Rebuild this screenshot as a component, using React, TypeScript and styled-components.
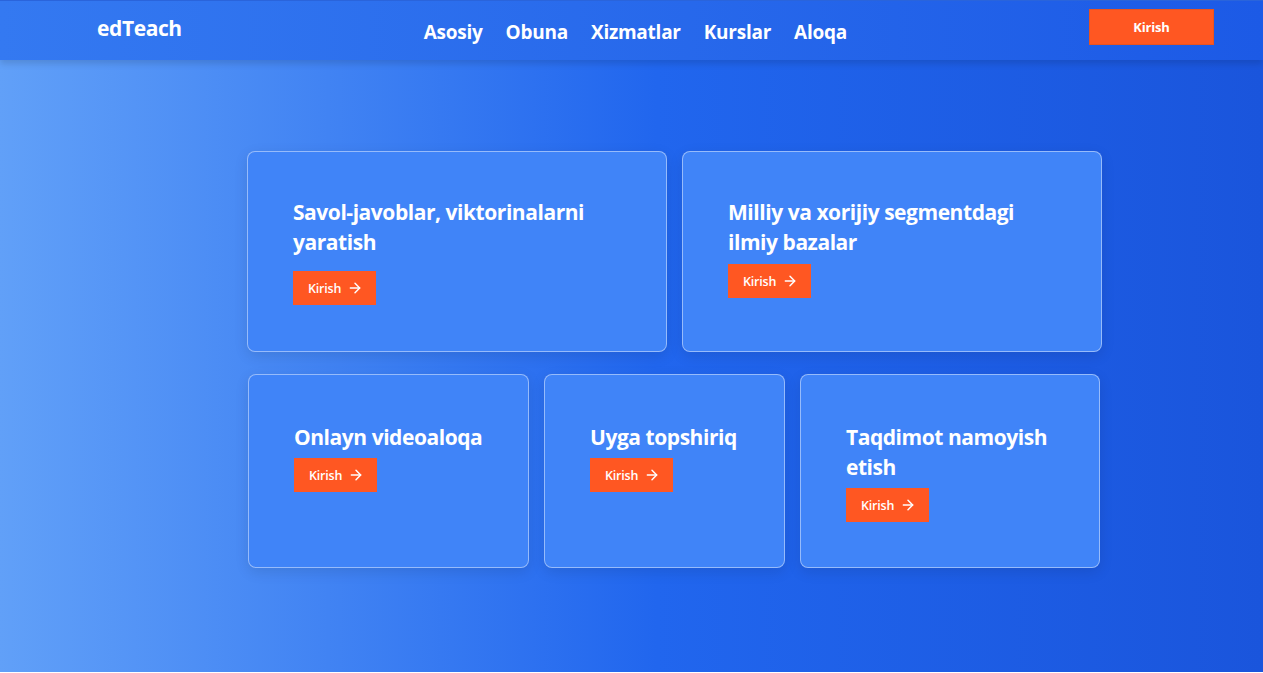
import React from "react";
import styled, { createGlobalStyle } from "styled-components";
import { ArrowRight } from "lucide-react";

const Global = createGlobalStyle`
  html, body { margin: 0; padding: 0; background: #ffffff; }
  * { box-sizing: border-box; }
  body { font-family: "Open Sans", "Noto Sans", sans-serif; }
`;

const Page = styled.div`
  height: 672px;
  display: flex;
  flex-direction: column;
  background: linear-gradient(to right, #61a0f8 0%, #2166ee 52%, #1a55dc 100%);
  overflow: hidden;
`;

const Header = styled.header`
  position: relative;
  z-index: 2;
  height: 60px;
  flex: none;
  display: flex;
  align-items: center;
  justify-content: space-between;
  padding: 0 49px 0 97px;
  background: linear-gradient(to right, #3479f1, #1c5ae6);
  box-shadow: 0 4px 6px rgba(0, 0, 0, 0.12);
  border-top: 1px solid #2a64db;
`;

const Logo = styled.div`
  color: #fff;
  font-size: 21px;
  font-weight: 700;
  letter-spacing: -0.4px;
  margin-top: -6px;
`;

const Nav = styled.nav`
  display: flex;
  gap: 23px;
  margin-top: 3px;
`;

const NavLink = styled.a`
  color: #fff;
  font-size: 19px;
  font-weight: 700;
  letter-spacing: -0.25px;
  text-decoration: none;
`;

const HeaderButton = styled.button`
  width: 125px;
  height: 36px;
  margin-top: -7px;
  background: #ff5722;
  border: 1px solid #e9541f;
  color: #fff;
  font-family: inherit;
  font-size: 13px;
  font-weight: 700;
  letter-spacing: -0.2px;
  cursor: pointer;
`;

const Main = styled.main`
  flex: 1;
  display: flex;
  justify-content: flex-start;
  padding: 91px 0 0 247px;
`;

const Grid = styled.div`
  width: 855px;
  display: flex;
  flex-direction: column;
  gap: 22px;
`;

const Row = styled.div<{ $cols: string; $offset: number }>`
  display: grid;
  grid-template-columns: ${(p) => p.$cols};
  gap: 15px;
  padding-left: ${(p) => p.$offset}px;
`;

const Card = styled.div<{ $h: number }>`
  height: ${(p) => p.$h}px;
  background: #4084f8;
  border: 1px solid rgba(255, 255, 255, 0.45);
  border-radius: 8px;
  box-shadow: 0 4px 14px rgba(0, 0, 0, 0.1);
  padding: ${(p) => (p.$h > 196 ? 45 : 47)}px 40px 0 45px;
  display: flex;
  flex-direction: column;
  align-items: flex-start;
`;

const Title = styled.h3`
  margin: 0;
  color: #fff;
  font-size: 21px;
  line-height: 30px;
  font-weight: 700;
  letter-spacing: -0.45px;
`;

const ActionButton = styled.button<{ $gap: number }>`
  margin-top: ${(p) => p.$gap}px;
  height: 34px;
  padding: 0 13px 0 15px;
  display: inline-flex;
  align-items: center;
  gap: 6px;
  background: #ff5722;
  border: none;
  color: #fff;
  font-family: inherit;
  font-size: 12.5px;
  font-weight: 600;
  letter-spacing: -0.2px;
  cursor: pointer;
`;

type CardData = { title: React.ReactNode; gap: number };

const row1: CardData[] = [
  { title: <>Savol-javoblar, viktorinalarni<br />yaratish</>, gap: 14 },
  { title: <>Milliy va xorijiy segmentdagi<br />ilmiy bazalar</>, gap: 7 },
];

const row2: CardData[] = [
  { title: "Onlayn videoaloqa", gap: 6 },
  { title: "Uyga topshiriq", gap: 6 },
  { title: <>Taqdimot namoyish<br />etish</>, gap: 6 },
];

const FeatureCard = ({ data, h }: { data: CardData; h: number }) => (
  <Card $h={h}>
    <Title>{data.title}</Title>
    <ActionButton $gap={data.gap}>
      Kirish <ArrowRight size={16} strokeWidth={2.2} />
    </ActionButton>
  </Card>
);

export default function App() {
  return (
    <>
      <Global />
      <Page>
        <Header>
          <Logo>edTeach</Logo>
          <Nav>
            {["Asosiy", "Obuna", "Xizmatlar", "Kurslar", "Aloqa"].map((n) => (
              <NavLink key={n} href="#">{n}</NavLink>
            ))}
          </Nav>
          <HeaderButton>Kirish</HeaderButton>
        </Header>
        <Main>
          <Grid>
            <Row $cols="420px 420px" $offset={0}>
              {row1.map((c, i) => (
                <FeatureCard key={i} data={c} h={201} />
              ))}
            </Row>
            <Row $cols="281px 241px 300px" $offset={1}>
              {row2.map((c, i) => (
                <FeatureCard key={i} data={c} h={194} />
              ))}
            </Row>
          </Grid>
        </Main>
      </Page>
    </>
  );
}
